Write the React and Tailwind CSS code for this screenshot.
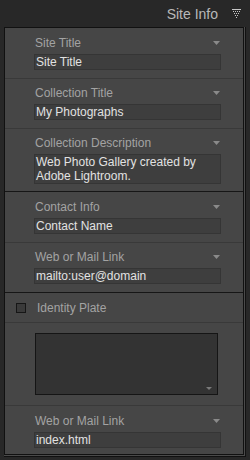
import React from "react";

const Tri = () => (
  <svg width="7" height="4" viewBox="0 0 7 4" className="block">
    <polygon points="0,0 7,0 3.5,4" fill="#8a8a8a" />
  </svg>
);

const Sep = ({ dark }) => (
  <div className={dark ? "h-px bg-[#161616]" : "h-px bg-[#393939]"} />
);

const Field = ({ label, value, pt = "pt-[7px]", pb = "pb-[8px]", multi }) => (
  <div className={`pl-[29px] ${pt} ${pb}`}>
    <div className="w-[187px] flex flex-col gap-[4px]">
      <div className="h-[14px] flex items-center justify-between pl-px">
        <span className="text-[12px] leading-[14px] text-[#a3a3a3]">{label}</span>
        <span className="mr-px">
          <Tri />
        </span>
      </div>
      {multi ? (
        <div className="h-[30px] border border-[#353535] bg-[#3e3e3e] px-px text-[12px] leading-[14px] text-[#e2e2e2]">
          {value.map((l) => (
            <div key={l}>{l}</div>
          ))}
        </div>
      ) : (
        <div className="h-[16px] border border-[#353535] bg-[#3e3e3e] px-px text-[12px] leading-[14px] text-[#e2e2e2]">
          {value}
        </div>
      )}
    </div>
  </div>
);

export default function App() {
  return (
    <div className="w-[250px] h-[460px] bg-[#282828] font-['Liberation_Sans',Arial,sans-serif] overflow-hidden">
      <div className="h-[27px] flex items-center justify-end pr-[9px] gap-[14px]">
        <span className="text-[14px] leading-[16px] text-[#b8b8b8]">Site Info</span>
        <svg width="9" height="9" viewBox="0 0 9 9" className="block">
          <rect x="0" y="0" width="9" height="1" fill="#c8c8c8" />
          {[1, 3, 5, 7].map((x) => (
            <rect key={"a" + x} x={x} y="2" width="1" height="1" fill="#c8c8c8" />
          ))}
          {[2, 4, 6].map((x) => (
            <rect key={"b" + x} x={x} y="4" width="1" height="1" fill="#c8c8c8" />
          ))}
          {[3, 5].map((x) => (
            <rect key={"c" + x} x={x} y="6" width="1" height="1" fill="#c8c8c8" />
          ))}
          <rect x="4" y="8" width="1" height="1" fill="#c8c8c8" />
        </svg>
      </div>
      <div className="ml-[4px] w-[242px] border-r border-b border-[#111] bg-[#4a4a4a] pr-px pb-px">
        <div className="w-[240px] border border-[#111] bg-[#464646] flex flex-col">
          <Field label="Site Title" value="Site Title" pt="pt-[8px]" />
          <Sep />
          <Field label="Collection Title" value="My Photographs" />
          <Sep />
          <Field
            label="Collection Description"
            value={["Web Photo Gallery created by", "Adobe Lightroom."]}
            multi
            pb="pb-[7px]"
          />
          <Sep dark />
          <Field label="Contact Info" value="Contact Name" pt="pt-[8px]" />
          <Sep />
          <Field label="Web or Mail Link" value="mailto:user@domain" />
          <Sep dark />
          <div className="h-[29px] flex items-center pl-[11px]">
            <div className="w-[10px] h-[10px] border border-[#161616] bg-[#3a3a3a]" />
            <span className="ml-[11px] text-[12px] leading-[14px] text-[#a3a3a3]">Identity Plate</span>
          </div>
          <Sep />
          <div className="pl-[30px] py-[10px]">
            <div className="w-[183px] h-[62px] border border-[#151515] bg-[#333333] flex items-end justify-end pr-[5px] pb-[4px]">
              <svg width="6" height="3" viewBox="0 0 6 3" className="block">
                <polygon points="0,0 6,0 3,3" fill="#7a7a7a" />
              </svg>
            </div>
          </div>
          <Sep />
          <Field label="Web or Mail Link" value="index.html" pt="pt-[8px]" pb="pb-[6px]" />
        </div>
      </div>
    </div>
  );
}
